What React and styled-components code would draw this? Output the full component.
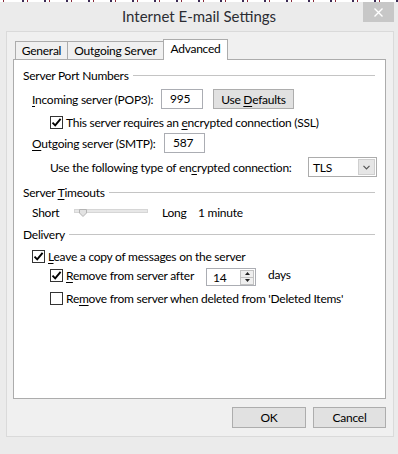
import React from 'react';
import styled, { createGlobalStyle } from 'styled-components';

const GlobalStyle = createGlobalStyle`
  html, body { margin: 0; padding: 0; background: #ebebeb; }
  body {
    font-family: Lato, "Noto Sans", sans-serif;
    font-size: 12px;
    letter-spacing: -0.25px;
    color: #000;
  }
`;

const Window = styled.div`
  width: 398px;
  height: 454px;
  background: #ebebeb;
  display: flex;
  flex-direction: column;
  overflow: hidden;
`;

// bits of the window lying behind this dialog
const BehindStrip = styled.div`
  height: 2px;
  background:
    repeating-linear-gradient(90deg, transparent 0 12px, #3b2b55 12px 14px, transparent 14px 17px, #8a2a3a 17px 18px, transparent 18px 22px),
    #fff;
  background-position: 10px 0, 0 0;
`;

const TitleBar = styled.div`
  height: 29px;
  display: grid;
  grid-template-columns: 1fr auto 1fr;
  align-items: start;
`;

const Title = styled.div`
  grid-column: 2;
  font-size: 15px;
  letter-spacing: 0;
  line-height: 29px;
  color: #2b2d33;
`;

const CloseButton = styled.div`
  grid-column: 3;
  justify-self: end;
  margin-right: 4px;
  width: 31px;
  height: 20px;
  background: #c7c7c7;
  display: flex;
  align-items: center;
  justify-content: center;
`;

const Client = styled.div`
  box-sizing: border-box;
  height: 406px;
  margin: 0 4px 0 6px;
  border: 1px solid #dadada;
  background: #f0f0f0;
  padding: 7px 7px 0 6px;
  display: flex;
  flex-direction: column;
`;

const TabRow = styled.div`
  display: flex;
  align-items: flex-end;
  height: 20px;
  padding-left: 2px;
`;

const Tab = styled.div`
  position: relative;
  z-index: ${p => (p.$active ? 1 : 0)};
  box-sizing: border-box;
  width: ${p => p.$w}px;
  height: ${p => (p.$active ? 21 : 18)}px;
  margin-left: ${p => (p.$first ? 0 : -1)}px;
  margin-bottom: ${p => (p.$active ? -1 : 0)}px;
  border: 1px solid #acacac;
  border-bottom: none;
  background: ${p => (p.$active ? '#fff' : '#f0f0f0')};
  display: flex;
  align-items: center;
  justify-content: center;
  padding-bottom: ${p => (p.$active ? 3 : 0)}px;
  line-height: 14px;
`;

const Panel = styled.div`
  box-sizing: border-box;
  width: 373px;
  height: 340px;
  border: 1px solid #acacac;
  background: #fff;
  padding: 7px 10px 0 9px;
  display: flex;
  flex-direction: column;
`;

const GroupHeader = styled.div`
  display: flex;
  align-items: center;
  height: 16px;
  margin-top: ${p => p.$mt || 0}px;
  gap: 4px;
  white-space: nowrap;

  &::after {
    content: '';
    flex: 1;
    height: 1px;
    background: #c4c4c4;
  }
`;

const Row = styled.div`
  display: flex;
  align-items: ${p => p.$align || 'center'};
  height: ${p => p.$h}px;
  margin-top: ${p => p.$mt}px;
  padding-left: ${p => p.$indent}px;
  white-space: nowrap;
`;

const FieldLabel = styled.span`
  flex-shrink: 0;
  width: ${p => p.$w}px;
`;

const U = styled.span`
  text-decoration: underline;
  text-underline-offset: 2px;
  text-decoration-thickness: 1px;
`;

const TextBox = styled.div`
  box-sizing: border-box;
  flex-shrink: 0;
  width: ${p => p.$w}px;
  height: 20px;
  border: 1px solid #abadb3;
  background: #fff;
  padding-left: 8px;
  line-height: 18px;
`;

const PushButton = styled.div`
  box-sizing: border-box;
  flex-shrink: 0;
  width: ${p => p.$w}px;
  height: ${p => p.$h || 21}px;
  margin-left: ${p => p.$ml || 0}px;
  border: 1px solid #adadad;
  background: #e1e1e1;
  display: flex;
  align-items: center;
  justify-content: center;
`;

const CheckRow = styled.label`
  display: flex;
  align-items: center;
  flex-shrink: 0;
  width: ${p => (p.$w ? `${p.$w}px` : 'auto')};
  gap: 3px;
`;

const Box = styled.span`
  box-sizing: border-box;
  width: 13px;
  height: 13px;
  border: 1px solid #333;
  background: #fff;
  display: flex;
  align-items: center;
  justify-content: center;
  flex-shrink: 0;
`;

const Select = styled.div`
  box-sizing: border-box;
  flex-shrink: 0;
  width: 69px;
  height: 20px;
  border: 1px solid #acacac;
  background: #fff;
  display: flex;
  align-items: center;
  padding: 1px 1px 1px 4px;
`;

const SelectValue = styled.span`
  flex: 1;
`;

const DropButton = styled.span`
  box-sizing: border-box;
  width: 17px;
  height: 16px;
  border: 1px solid #cfcfcf;
  background: #e6e6e6;
  display: flex;
  align-items: center;
  justify-content: center;
`;

const SliderLabel = styled.span`
  flex-shrink: 0;
  width: ${p => p.$w}px;
  margin-left: ${p => p.$ml || 0}px;
`;

const Slider = styled.div`
  position: relative;
  flex-shrink: 0;
  width: 74px;
  height: 16px;
`;

const Track = styled.div`
  box-sizing: border-box;
  margin-top: 5px;
  height: 4px;
  border: 1px solid #d6d6d6;
  background: #e7e7e7;
`;

const Thumb = styled.svg`
  position: absolute;
  left: 5px;
  top: 5px;
`;

const Spinner = styled.div`
  box-sizing: border-box;
  flex-shrink: 0;
  width: 50px;
  height: 18px;
  border: 1px solid #abadb3;
  background: #fff;
  display: flex;
  align-items: center;
  padding: 1px 1px 1px 6px;
`;

const SpinValue = styled.span`
  flex: 1;
  line-height: 16px;
  padding-top: 2px;
`;

const SpinButtons = styled.div`
  display: flex;
  flex-direction: column;
  width: 14px;
  height: 15px;
  border: 1px solid #c2c2c2;
  box-sizing: border-box;
`;

const SpinHalf = styled.div`
  flex: 1;
  background: #efefef;
  display: flex;
  align-items: center;
  justify-content: center;
  & + & { border-top: 1px solid #c2c2c2; }
`;

const Suffix = styled.span`
  margin-left: 12px;
  line-height: 14px;
`;

const ButtonRow = styled.div`
  display: flex;
  justify-content: flex-end;
  gap: 7px;
  margin-top: 8px;
`;

const Check = () => (
  <svg width="11" height="11" viewBox="0 0 11 11">
    <path d="M1.5 5.6 L4.2 8.3 L9.6 1.8" fill="none" stroke="#000" strokeWidth="1.9" />
  </svg>
);

const CheckBox = ({ checked, children, w }) => (
  <CheckRow $w={w}>
    <Box>{checked && <Check />}</Box>
    <span>{children}</span>
  </CheckRow>
);

export default function App() {
  return (
    <>
      <GlobalStyle />
      <Window>
        <BehindStrip />
        <TitleBar>
          <Title>Internet E-mail Settings</Title>
          <CloseButton>
            <svg width="9" height="9" viewBox="0 0 9 9">
              <path d="M0.5 0.5 L8.5 8.5 M8.5 0.5 L0.5 8.5" stroke="#fff" strokeWidth="1.4" />
            </svg>
          </CloseButton>
        </TitleBar>

        <Client>
          <TabRow>
            <Tab $w={53} $first>General</Tab>
            <Tab $w={97}>Outgoing Server</Tab>
            <Tab $w={65} $active>Advanced</Tab>
          </TabRow>

          <Panel>
            <GroupHeader><span>Server Port Numbers</span></GroupHeader>

            <Row $h={20} $mt={6} $indent={9}>
              <FieldLabel $w={129}><U>I</U>ncoming server (POP3):</FieldLabel>
              <TextBox $w={42}>995</TextBox>
              <PushButton $w={81} $h={20} $ml={10}><span>Use <U>D</U>efaults</span></PushButton>
            </Row>

            <Row $h={14} $mt={6} $indent={27}>
              <CheckBox checked>This server requires an <U>e</U>ncrypted connection (SSL)</CheckBox>
            </Row>

            <Row $h={20} $mt={4} $indent={9}>
              <FieldLabel $w={132}><U>O</U>utgoing server (SMTP):</FieldLabel>
              <TextBox $w={41}>587</TextBox>
            </Row>

            <Row $h={20} $mt={4} $indent={27}>
              <FieldLabel $w={258}>Use the following type of en<U>c</U>rypted connection:</FieldLabel>
              <Select>
                <SelectValue>TLS</SelectValue>
                <DropButton>
                  <svg width="7" height="5" viewBox="0 0 7 5">
                    <path d="M0.5 0.8 L3.5 3.8 L6.5 0.8" fill="none" stroke="#555" strokeWidth="1.2" />
                  </svg>
                </DropButton>
              </Select>
            </Row>

            <GroupHeader $mt={7}><span>Server <U>T</U>imeouts</span></GroupHeader>

            <Row $h={16} $mt={4} $indent={9}>
              <SliderLabel $w={42}>Short</SliderLabel>
              <Slider>
                <Track />
                <Thumb width="8" height="8" viewBox="0 0 8 8">
                  <path d="M0.5 0.5 H7.5 V4 L4 7.5 L0.5 4 Z" fill="#e2e2e2" stroke="#b4b4b4" />
                </Thumb>
              </Slider>
              <SliderLabel $w={36} $ml={14}>Long</SliderLabel>
              <SliderLabel $w={60}>1 minute</SliderLabel>
            </Row>

            <GroupHeader $mt={6}><span>Delivery</span></GroupHeader>

            <Row $h={14} $mt={7} $indent={9}>
              <CheckBox checked><U>L</U>eave a copy of messages on the server</CheckBox>
            </Row>

            <Row $h={18} $mt={5} $indent={27} $align="flex-start">
              <CheckBox checked w={156}><U>R</U>emove from server after</CheckBox>
              <Spinner>
                <SpinValue>14</SpinValue>
                <SpinButtons>
                  <SpinHalf>
                    <svg width="5" height="3" viewBox="0 0 5 3"><path d="M0 3 L2.5 0 L5 3 Z" fill="#222" /></svg>
                  </SpinHalf>
                  <SpinHalf>
                    <svg width="5" height="3" viewBox="0 0 5 3"><path d="M0 0 L2.5 3 L5 0 Z" fill="#222" /></svg>
                  </SpinHalf>
                </SpinButtons>
              </Spinner>
              <Suffix>days</Suffix>
            </Row>

            <Row $h={14} $mt={5} $indent={27}>
              <CheckBox>Re<U>m</U>ove from server when deleted from 'Deleted Items'</CheckBox>
            </Row>
          </Panel>

          <ButtonRow>
            <PushButton $w={74}>OK</PushButton>
            <PushButton $w={73}>Cancel</PushButton>
          </ButtonRow>
        </Client>
      </Window>
    </>
  );
}
